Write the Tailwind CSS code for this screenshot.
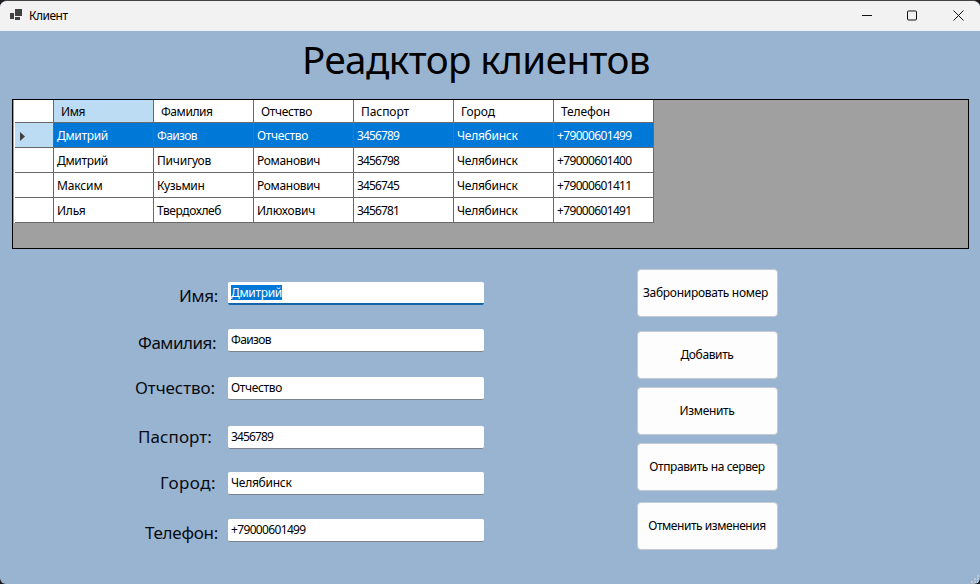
<!DOCTYPE html>
<html lang="ru">
<head>
<meta charset="utf-8">
<title>Клиент</title>
<script src="https://cdn.jsdelivr.net/npm/@tailwindcss/browser@4"></script>
</head>
<body class="bg-[#1c1a1c] overflow-hidden font-['Noto_Sans',sans-serif] text-black">
<div class="relative w-[980px] h-[584px] rounded-t-[7px] rounded-b-[6px] border-t border-[#454044] bg-[#99b4d1] overflow-hidden flex flex-col whitespace-nowrap">
  <header class="h-[30px] shrink-0 bg-[#f2f2f3] border-b border-[#eaf0fa] flex items-center">
    <svg class="ml-[10px] w-3 h-3 -mt-px" viewBox="0 0 12 12" fill="#414141"><path d="M5 0h7v7H5zM0 4h4v6H0zM5 8h5v3H5z"/></svg>
    <span class="ml-[7px] text-[12px]" data-w="38.500" data-size="12">Клиент</span>
    <svg class="ml-auto mr-[16px] w-[102px] h-[11px] -mt-px" viewBox="0 0 102 11" fill="none" stroke="#111"><path d="M0 5.500h10"/><rect x="45.500" y="1" width="9" height="9" rx="1"/><path d="M91.500 .5l10 10m0-10l-10 10"/></svg>
  </header>
  <h1 class="h-[68px] shrink-0 pl-[302px] text-[38.500px] leading-[57px] font-normal"><span data-w="348" data-size="38.5">Реадктор клиентов</span></h1>
  <div class="ml-[12px] w-[957px] h-[150px] shrink-0 border border-black bg-[#a0a0a0] text-[12px]">
    <div id="grid" class="ml-px w-[640px] border-l border-white"></div>
  </div>
  <main class="flex items-start">
    <form id="form" class="w-[484px] pt-[33px]"></form>
    <div id="actions" class="ml-[153px] w-[141px] pt-[20px]"></div>
  </main>
  <svg class="absolute right-0 bottom-0 w-[9px] h-[9px]" viewBox="0 0 9 9" fill="#c0c8d1"><path d="M6 0h2v2H6zM3 3h2v2H3zM6 3h2v2H6zM0 6h2v2H0zM3 6h2v2H3zM6 6h2v2H6z"/></svg>
</div>
<script>
const heads = ['Имя','Фамилия','Отчество','Паспорт','Город','Телефон'];
const rows = [
  ['Дмитрий','Фаизов','Отчество','3456789','Челябинск','+79000601499'],
  ['Дмитрий','Пичигуов','Романович','3456798','Челябинск','+79000601400'],
  ['Максим','Кузьмин','Романович','3456745','Челябинск','+79000601411'],
  ['Илья','Твердохлеб','Илюхович','3456781','Челябинск','+79000601491']
];
// Target advance widths in pixels for 12px UI text
const widths = {'Имя':24,'Фамилия':51.500,'Отчество':51,'Паспорт':48,'Город':34,'Телефон':49,'Дмитрий':51,'Фаизов':40,'Пичигуов':54,'Романович':63,'Максим':45.500,'Кузьмин':47.500,'Илья':28.500,'Твердохлеб':64,'Илюхович':58,'Челябинск':60.500,
  '3456789':42,'3456798':42,'3456745':42,'3456781':42,'+79000601499':74.500,'+79000601400':74.500,'+79000601411':74.500,'+79000601491':74.500};
const t = (s, w = widths[s], size = 12) => `<span data-w="${w}" data-size="${size}">${s}</span>`;
let g = '<div class="flex h-[23px] border-b border-[#696969]"><div class="w-[39px] bg-white border-r border-[#696969]"></div>';
heads.forEach((h, i) => g += `<div class="w-[100px] border-r border-[#696969] pl-[7px] leading-[23px] ${i ? 'bg-white' : 'bg-[#bcdcf4]'}">${t(h)}</div>`);
g += '</div>';
rows.forEach((r, n) => {
  g += `<div class="flex h-[25px] border-b border-[#696969]"><div class="w-[39px] border-r border-[#696969] ${n ? 'bg-white' : 'bg-[#bcdcf4]'}">${n ? '' : '<svg class="w-[5px] h-[9px] mt-[9px] ml-[5px]" viewBox="0 0 5 9"><path d="M0 0L5 4.500L0 9z" fill="#404040"/></svg>'}</div>`;
  r.forEach(c => g += `<div class="w-[100px] border-r border-[#696969] pl-[3px] leading-[25px] ${n ? 'bg-white' : 'bg-[#0078d7] text-white'}">${t(c)}</div>`);
  g += '</div>';
});
document.getElementById('grid').innerHTML = g;

const fields = [
  ['Имя:', 39, 'mb-[24px]', 'pr-[10px] pt-[2px]', 'leading-[23px]', 'Дмитрий'],
  ['Фамилия:', 78, 'mb-[25px]', 'pr-[12px] pt-[2px]', 'leading-[23px]', 'Фаизов'],
  ['Отчество:', 80, 'mb-[26px]', 'pr-[13px]', 'leading-[21px]', 'Отчество'],
  ['Паспорт:', 74, 'mb-[23px]', 'pr-[16px]', 'leading-[21px]', '3456789'],
  ['Город:', 56, 'mb-[24px]', 'pr-[12px]', 'leading-[21px]', 'Челябинск'],
  ['Телефон:', 73, '', 'pr-[10px] pt-[2px]', 'leading-[23px]', '+79000601499']
];
document.getElementById('form').innerHTML = fields.map(([l, w, m, p, lh, v], i) =>
  `<div class="flex h-[23px] ${m}"><label class="w-[228px] text-right text-[17px] text-[#080c12] ${lh} ${p}">${t(l, w, 17)}</label>` +
  `<div class="w-[256px] h-[23px] rounded-[2px] bg-white pl-[3px] text-[12px] leading-[22px] ${i ? 'border-b border-[#7c838c]' : 'border-b-2 border-[#1464ac]'}">` +
  `${i ? t(v) : `<span class="inline-block h-[15px] mt-[3px] leading-[15px] align-top bg-[#0078d7] text-white">${t(v)}</span>`}</div></div>`).join('');

const actions = [['Забронировать номер', 125, 'mb-[14px]'], ['Добавить', 53, 'mb-[8px]'], ['Изменить', 55, 'mb-[8px]'], ['Отправить на сервер', 115.500, 'mb-[11px]'], ['Отменить изменения', 117.500, '']];
document.getElementById('actions').innerHTML = actions.map(([s, w, m], i) =>
  `<button class="flex items-center justify-center w-[141px] h-[48px] rounded-[4px] border border-[#c3cad3] bg-[#fdfdfd] text-[12px] ${i ? 'pr-px' : 'pr-[4px]'} ${m}">${t(s, w)}</button>`).join('');

// Spread each label over its target width
const ctx = document.createElement('canvas').getContext('2d');
document.querySelectorAll('[data-w]').forEach(e => {
  ctx.font = e.dataset.size + 'px "Noto Sans"';
  e.style.letterSpacing = (e.dataset.w - ctx.measureText(e.textContent).width) / e.textContent.length + 'px';
});
</script>
</body>
</html>
